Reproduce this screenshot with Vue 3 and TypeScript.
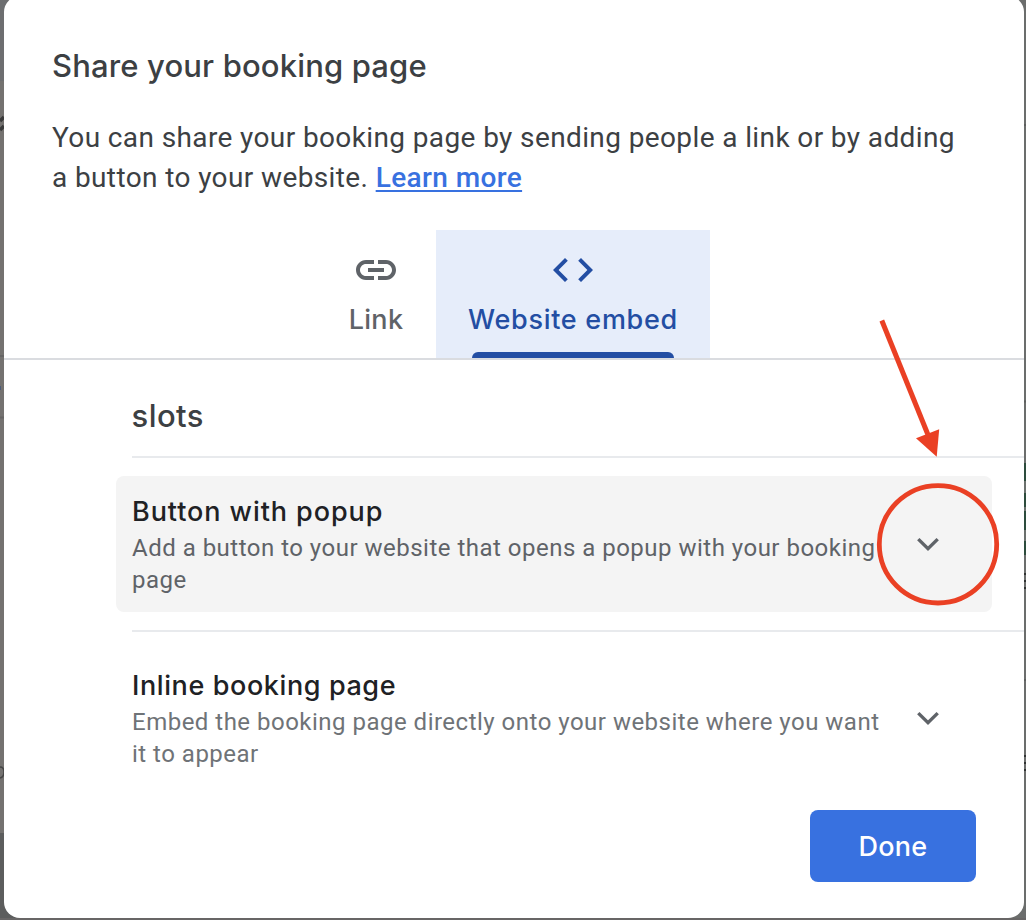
<script setup lang="ts">
interface EmbedOption {
  title: string
  description: string
  active: boolean
}

const options: EmbedOption[] = [
  {
    title: 'Button with popup',
    description: 'Add a button to your website that opens a popup with your booking page',
    active: true,
  },
  {
    title: 'Inline booking page',
    description: 'Embed the booking page directly onto your website where you want it to appear',
    active: false,
  },
]
</script>

<template>
  <div class="screen">
    <svg class="backdrop" viewBox="0 0 1026 920" aria-hidden="true">
      <rect width="1026" height="920" fill="#6b6d6c" />
      <rect width="20" height="81" fill="#6d6e70" />
      <rect y="81" width="4" height="752" fill="#747270" />
      <rect y="833" width="20" height="87" fill="#5c5d5d" />
      <path d="M0 121L4 117M0 130L4 126" stroke="#3a3a3a" stroke-width="3.500" />
      <path d="M0 356h4M0 417.500h4" stroke="#666565" stroke-width="2" />
      <path d="M0 386v4" stroke="#4d5b78" stroke-width="2" />
      <path d="M0 767q4 0 4 5t-4 6" stroke="#454545" stroke-width="1.500" fill="none" />
      <path d="M1024 125h2M1024 401.500h2M1024 680h2" stroke="#5c5e5d" stroke-width="2" />
      <rect x="1024" y="463" width="2" height="92" fill="#2d4c3d" />
      <path d="M1025 481v12M1025 507v4M1025 530v11" stroke="#6b706d" stroke-width="2" />
      <path d="M1024 574h2M1024 581h2M1024 588h2M1024 756h2M1024 763h2M1024 770h2" stroke="#303232" stroke-width="2" />
      <path d="M0 919h1026" stroke="#686666" stroke-width="2" />
    </svg>

    <section class="dialog" role="dialog" aria-labelledby="share-title">
      <header class="intro">
        <h1 id="share-title" class="display heading">Share your booking page</h1>
        <p class="lead">
          You can share your booking page by sending people a link or by adding a button to your website.
          <a href="#" class="learn">Learn more</a>
        </p>
      </header>

      <nav class="tabs">
        <button class="tab link-tab">
          <svg class="tab-icon" viewBox="0 0 24 24">
            <path d="M17 7h-4v2h4c1.650 0 3 1.350 3 3s-1.350 3-3 3h-4v2h4c2.760 0 5-2.240 5-5s-2.240-5-5-5zm-6 8H7c-1.650 0-3-1.350-3-3s1.350-3 3-3h4V7H7c-2.760 0-5 2.240-5 5s2.240 5 5 5h4v-2zm-3-4h8v2H8z" />
          </svg>
          <span class="display tab-label link-label">Link</span>
        </button>
        <button class="tab embed-tab">
          <svg class="tab-icon" viewBox="0 0 24 24">
            <path d="M9.400 16.600L4.800 12l4.600-4.600L8 6l-6 6 6 6 1.400-1.400zm5.200 0l4.600-4.600-4.600-4.600L16 6l6 6-6 6-1.400-1.400z" />
          </svg>
          <span class="display tab-label embed-label">Website embed</span>
          <span class="indicator"></span>
        </button>
      </nav>

      <main class="content">
        <h2 class="display slots">slots</h2>
        <article v-for="option in options" :key="option.title" class="option">
          <div class="card" :class="{ active: option.active }">
            <div class="copy">
              <h3 class="display option-title" :class="{ inline: !option.active }">{{ option.title }}</h3>
              <p class="description">{{ option.description }}</p>
            </div>
            <svg class="chevron" viewBox="0 0 24 15">
              <path d="M2.300 2.100L12 11.600l9.700-9.500" />
            </svg>
          </div>
        </article>
      </main>

      <footer class="actions">
        <button class="display done">Done</button>
      </footer>
    </section>

    <svg class="annotation" viewBox="0 0 1026 920" aria-hidden="true">
      <circle cx="938" cy="544.300" r="58.700" />
      <path class="shaft" d="M881.800 320.500L928.500 436" />
      <path class="head" d="M936.700 456.800L916 438.300L939.200 429.300z" />
    </svg>
  </div>
</template>

<style>
body {
  overflow: hidden;
}
</style>

<style scoped>
.screen {
  position: relative;
  width: 1026px;
  height: 920px;
  overflow: hidden;
  font-family: Roboto, "Liberation Sans", sans-serif;
}

.screen *,
.screen {
  box-sizing: border-box;
}

h1, h2, h3, p {
  margin: 0;
  font-weight: 400;
}

button {
  border: 0;
  padding: 0;
  background: none;
}

.backdrop,
.annotation {
  position: absolute;
  inset: 0;
  width: 1026px;
  height: 920px;
}

.annotation {
  pointer-events: none;
}

.annotation circle {
  fill: none;
  stroke: #ea4024;
  stroke-width: 4.800;
}

.shaft {
  stroke: #ea4024;
  stroke-width: 5;
}

.head {
  fill: #ea4024;
}

.dialog {
  position: relative;
  width: 1020px;
  height: 922px;
  margin: -4px 0 0 4px;
  border-radius: 16px;
  background: #fff;
  overflow: hidden;
  display: flex;
  flex-direction: column;
}

.display {
  font-family: Inter, "Noto Sans", sans-serif;
  font-weight: 500;
  white-space: nowrap;
}

.intro {
  height: 234px;
  padding: 50px 48px 0;
}

.heading {
  height: 40px;
  font-size: 31px;
  line-height: 40px;
  letter-spacing: 0.150px;
  color: #3c4043;
}

.lead {
  width: 924px;
  margin-top: 32px;
  font-size: 28px;
  line-height: 40px;
  letter-spacing: 0.385px;
  color: #3c4043;
}

.learn {
  font-weight: 500;
  color: #3871e0;
  text-decoration-thickness: 2px;
  text-underline-offset: 3px;
}

.tabs {
  display: flex;
  justify-content: center;
  height: 130px;
  padding-right: 2px;
  border-bottom: 2px solid #dadce0;
}

.tab {
  display: flex;
  flex-direction: column;
  align-items: center;
  height: 128px;
  padding-top: 16px;
  color: #5f6368;
}

.link-tab {
  width: 120px;
}

.embed-tab {
  width: 274px;
  background: #e6edfa;
  color: #234ea3;
}

.tab-icon {
  width: 48px;
  height: 48px;
  fill: currentColor;
}

.tab-label {
  margin-top: 8px;
  font-size: 27px;
  line-height: 36px;
}

.link-label {
  letter-spacing: 0.300px;
}

.embed-label {
  letter-spacing: 0.720px;
}

.indicator {
  width: 202px;
  height: 6px;
  margin-top: auto;
  border-radius: 6px 6px 0 0;
  background: #234ea3;
}

.content {
  padding-left: 112px;
}

.slots {
  height: 96px;
  padding: 36px 0 0 15.500px;
  font-size: 31px;
  line-height: 40px;
  letter-spacing: 0.450px;
  color: #3c4043;
}

.option {
  height: 174px;
}

.option::before {
  content: "";
  display: block;
  height: 2px;
  margin: 0 0 18px 16px;
  background: #e8eaed;
}

.card {
  display: flex;
  width: 876px;
  height: 136px;
  padding: 16px;
  border-radius: 8px;
}

.card.active {
  background: #f4f4f4;
}

.copy {
  width: 760px;
}

.option-title {
  height: 40px;
  font-size: 27px;
  line-height: 39px;
  letter-spacing: 0.930px;
  color: #202124;
}

.option-title.inline {
  letter-spacing: 0.600px;
}

.description {
  font-size: 24px;
  line-height: 32px;
  letter-spacing: 0.490px;
  color: #5f6368;
}

.card:not(.active) .description {
  color: #6f7377;
}

.chevron {
  width: 24px;
  height: 15px;
  margin: 45px 0 0 24px;
  fill: none;
  stroke: #5f6368;
  stroke-width: 3.400;
}

.actions {
  display: flex;
  justify-content: flex-end;
  padding: 6px 48px 0 0;
}

.done {
  width: 166px;
  height: 72px;
  border-radius: 8px;
  background: #3871e0;
  color: #fff;
  font-size: 27px;
  letter-spacing: 0.300px;
}
</style>
